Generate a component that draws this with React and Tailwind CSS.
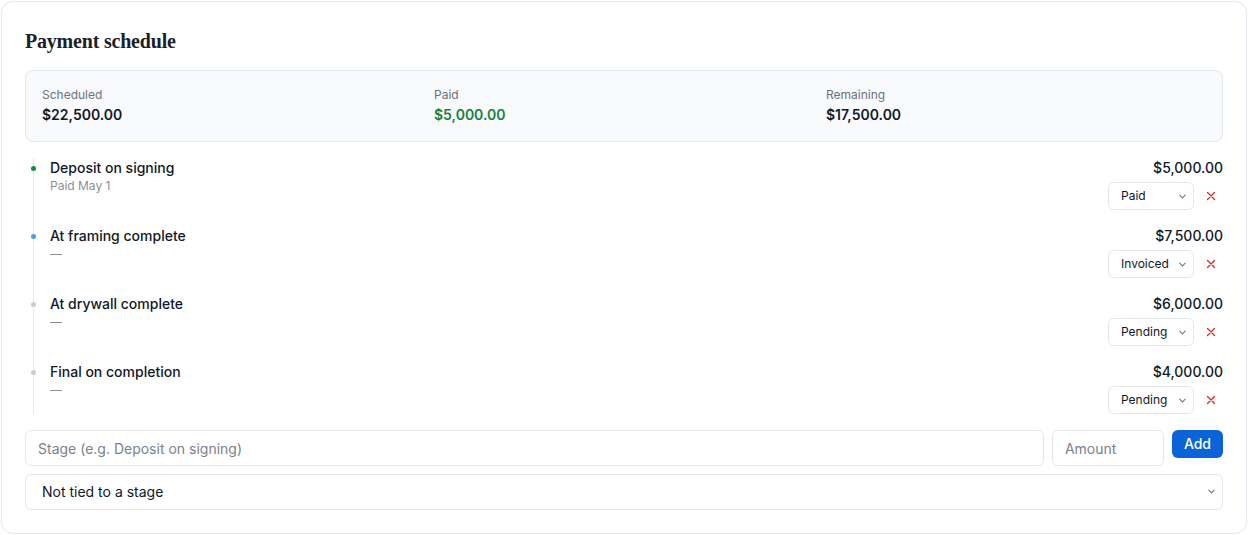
import { useState } from 'react'

const fmt = (n) => '$' + n.toLocaleString('en-US', { minimumFractionDigits: 2, maximumFractionDigits: 2 })

const initial = [
  { id: 1, stage: 'Deposit on signing', amount: 5000, status: 'Paid', note: 'Paid May 1' },
  { id: 2, stage: 'At framing complete', amount: 7500, status: 'Invoiced', note: '—' },
  { id: 3, stage: 'At drywall complete', amount: 6000, status: 'Pending', note: '—' },
  { id: 4, stage: 'Final on completion', amount: 4000, status: 'Pending', note: '—' },
]

const dotColor = {
  Paid: 'bg-[#16894a]',
  Invoiced: 'bg-[#4b9be8]',
  Pending: 'bg-[#c8cbd0]',
}

function Chevron({ className }) {
  return (
    <svg viewBox="0 0 16 16" className={className} fill="none" stroke="currentColor" strokeWidth="1.5" strokeLinecap="round" strokeLinejoin="round">
      <path d="M4 6l4 4 4-4" />
    </svg>
  )
}

function Summary({ label, value, tone }) {
  return (
    <div>
      <div className="text-xs text-[#6b7280] leading-5">{label}</div>
      <div className={`text-sm font-semibold leading-5 ${tone || 'text-[#111827]'}`}>{value}</div>
    </div>
  )
}

export default function App() {
  const [items, setItems] = useState(initial)
  const [stage, setStage] = useState('')
  const [amount, setAmount] = useState('')

  const scheduled = items.reduce((s, i) => s + i.amount, 0)
  const paid = items.filter(i => i.status === 'Paid').reduce((s, i) => s + i.amount, 0)

  const setStatus = (id, status) => setItems(items.map(i => i.id === id ? { ...i, status } : i))
  const remove = (id) => setItems(items.filter(i => i.id !== id))
  const add = () => {
    if (!stage || !amount) return
    setItems([...items, { id: Date.now(), stage, amount: Number(amount), status: 'Pending', note: '—' }])
    setStage('')
    setAmount('')
  }

  return (
    <div className="min-h-screen bg-white p-px font-['Inter',sans-serif] text-[#111827]">
      <div className="border border-[#e2e8f0] rounded-xl px-[23px] pt-[25px] pb-6 h-[533px]">
        <h2 className="font-['Liberation_Serif',serif] font-bold text-[20px] leading-7 text-[#1a1f2b] tracking-[-0.2px]">Payment schedule</h2>

        <div className="mt-[15px] border border-[#e2e8f0] bg-[#f8fafc] rounded-lg px-4 pt-[14px] pb-4 grid grid-cols-3 gap-3">
          <Summary label="Scheduled" value={fmt(scheduled)} />
          <Summary label="Paid" value={fmt(paid)} tone="text-[#16803f]" />
          <Summary label="Remaining" value={fmt(scheduled - paid)} />
        </div>

        <div className="mt-4 ml-2 border-l border-[#e2e8f0] flex flex-col gap-4">
          {items.map(item => (
            <div key={item.id} className="relative flex justify-between pl-4">
              <span className={`absolute left-[-3px] top-[8px] w-[5px] h-[5px] rounded-full ${dotColor[item.status]}`} />
              <div>
                <div className="text-sm font-medium leading-5 text-[#111827]">{item.stage}</div>
                <div className="text-xs leading-4 text-[#8a9099]">{item.note}</div>
              </div>
              <div className="flex flex-col items-end">
                <div className="text-sm font-medium leading-5 text-[#111827]">{fmt(item.amount)}</div>
                <div className="mt-1 flex items-center gap-[5px]">
                  <div className="relative">
                    <select
                      value={item.status}
                      onChange={e => setStatus(item.id, e.target.value)}
                      className="appearance-none w-[86px] h-7 pl-3 pr-6 text-xs text-[#111827] bg-white border border-[#e2e8f0] rounded-md outline-none"
                    >
                      <option>Pending</option>
                      <option>Invoiced</option>
                      <option>Paid</option>
                    </select>
                    <Chevron className="pointer-events-none absolute right-[6px] top-[9px] w-[11px] h-[11px] text-[#6b7280]" />
                  </div>
                  <button onClick={() => remove(item.id)} className="w-6 h-6 flex items-center justify-center text-[#e02424]">
                    <svg viewBox="0 0 12 12" className="w-[12px] h-[12px]" stroke="currentColor" strokeWidth="1.3" strokeLinecap="round">
                      <path d="M2.5 2.5l7 7M9.5 2.5l-7 7" />
                    </svg>
                  </button>
                </div>
              </div>
            </div>
          ))}
        </div>

        <div className="mt-4 flex items-start gap-2">
          <input
            value={stage}
            onChange={e => setStage(e.target.value)}
            placeholder="Stage (e.g. Deposit on signing)"
            className="flex-1 h-9 px-3 text-sm border border-[#e2e8f0] rounded-md outline-none placeholder:text-[#7b818b]"
          />
          <input
            value={amount}
            onChange={e => setAmount(e.target.value)}
            placeholder="Amount"
            className="w-[112px] h-9 px-3 text-sm border border-[#e2e8f0] rounded-md outline-none placeholder:text-[#7b818b]"
          />
          <button onClick={add} className="h-7 px-3 text-sm font-medium text-white bg-[#0b63d8] rounded-md">Add</button>
        </div>

        <div className="mt-2 relative">
          <select className="appearance-none w-full h-9 pl-4 pr-8 text-sm text-[#111827] bg-white border border-[#e2e8f0] rounded-md outline-none">
            <option>Not tied to a stage</option>
            {items.map(i => <option key={i.id}>{i.stage}</option>)}
          </select>
          <Chevron className="pointer-events-none absolute right-[6px] top-[12px] w-[11px] h-[11px] text-[#6b7280]" />
        </div>
      </div>
    </div>
  )
}
